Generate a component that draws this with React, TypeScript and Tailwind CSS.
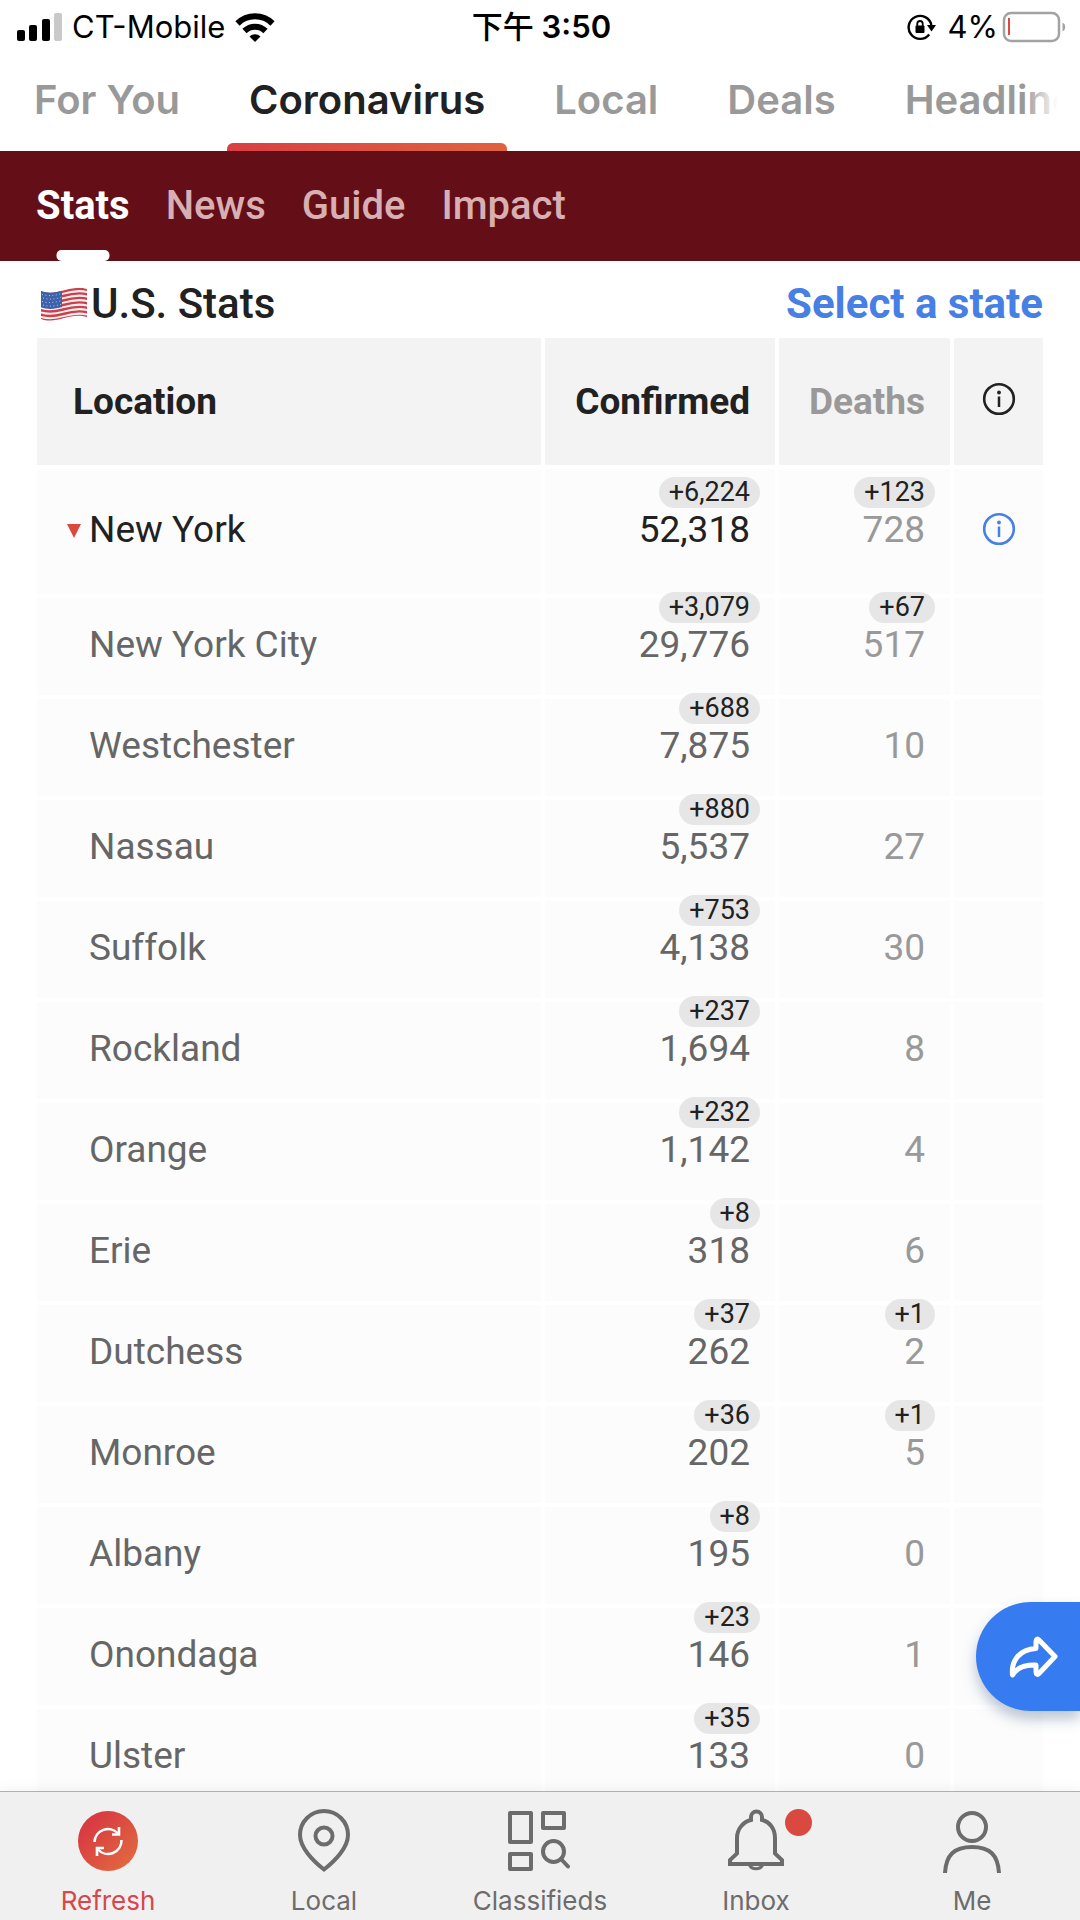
import { useState } from 'react';
import type { ReactNode } from 'react';
import { clsx } from 'clsx';

interface StatRow {
    name: string;
    confirmed: string;
    newConfirmed?: string;
    deaths: string;
    newDeaths?: string;
}

const state: StatRow = { name: 'New York', confirmed: '52,318', newConfirmed: '+6,224', deaths: '728', newDeaths: '+123' };

const counties: StatRow[] = [
    { name: 'New York City', confirmed: '29,776', newConfirmed: '+3,079', deaths: '517', newDeaths: '+67' },
    { name: 'Westchester', confirmed: '7,875', newConfirmed: '+688', deaths: '10' },
    { name: 'Nassau', confirmed: '5,537', newConfirmed: '+880', deaths: '27' },
    { name: 'Suffolk', confirmed: '4,138', newConfirmed: '+753', deaths: '30' },
    { name: 'Rockland', confirmed: '1,694', newConfirmed: '+237', deaths: '8' },
    { name: 'Orange', confirmed: '1,142', newConfirmed: '+232', deaths: '4' },
    { name: 'Erie', confirmed: '318', newConfirmed: '+8', deaths: '6' },
    { name: 'Dutchess', confirmed: '262', newConfirmed: '+37', deaths: '2', newDeaths: '+1' },
    { name: 'Monroe', confirmed: '202', newConfirmed: '+36', deaths: '5', newDeaths: '+1' },
    { name: 'Albany', confirmed: '195', newConfirmed: '+8', deaths: '0' },
    { name: 'Onondaga', confirmed: '146', newConfirmed: '+23', deaths: '1' },
    { name: 'Ulster', confirmed: '133', newConfirmed: '+35', deaths: '0' },
];

const channels = ['For You', 'Coronavirus', 'Local', 'Deals', 'Headlines'];
const sections = ['Stats', 'News', 'Guide', 'Impact'];

function StatusBar() {
    return (
        <div className="grid h-[54px] shrink-0 grid-cols-3 items-center pl-[17px] pr-[14px] text-[31px] leading-9 text-black">
            <div className="flex items-center gap-[10px]">
                <svg width="45" height="30" viewBox="0 0 45 30" aria-hidden="true">
                    <rect x="0" y="18" width="8" height="11" rx="2" />
                    <rect x="12" y="13" width="8" height="16" rx="2" />
                    <rect x="25" y="7" width="8" height="22" rx="2" />
                    <rect x="37" y="1" width="8" height="28" rx="2" fill="#c9c9c9" />
                </svg>
                <span>CT-Mobile</span>
                <svg width="40" height="30" viewBox="0 0 40 30" fill="none" stroke="#000" strokeWidth="6" aria-hidden="true">
                    <path d="M2.500 11.500a25 25 0 0 1 35 0" />
                    <path d="M9.500 19a15 15 0 0 1 21 0" />
                    <path d="M20 30l-5.500-5.500a8 8 0 0 1 11 0z" fill="#000" stroke="none" />
                </svg>
            </div>
            <div className="text-center font-semibold">
                <span className="font-medium">下午</span> 3:50
            </div>
            <div className="flex items-center justify-end">
                <svg className="mr-3" width="29" height="28" viewBox="0 0 29 28" aria-hidden="true">
                    <path d="M22.200 21.500A11.500 11.500 0 1 1 24.400 12" fill="none" stroke="#000" strokeWidth="2.400" />
                    <path d="M20 12h9l-4.500 6.500z" />
                    <rect x="8.500" y="12.500" width="9" height="7.500" rx="1" />
                    <path d="M10.300 13v-2.300a2.700 2.700 0 0 1 5.400 0V13" fill="none" stroke="#000" strokeWidth="1.800" />
                </svg>
                <span>4%</span>
                <svg className="ml-1" width="64" height="32" viewBox="0 0 64 32" aria-hidden="true">
                    <rect x="2" y="2" width="55" height="28" rx="7" fill="none" stroke="#a3a3a3" strokeWidth="2.500" />
                    <rect x="6" y="7" width="2" height="17" fill="#e0483e" />
                    <path d="M60.500 11.500a5 5 0 0 1 0 9z" fill="#a3a3a3" />
                </svg>
            </div>
        </div>
    );
}

function InfoIcon() {
    return (
        <svg width="34" height="34" viewBox="0 0 34 34" fill="none" stroke="currentColor" strokeWidth="2.600" aria-hidden="true">
            <circle cx="17" cy="17" r="14.800" />
            <path d="M17 14.500v10.500" strokeWidth="2.500" />
            <circle cx="17" cy="10.500" r="1.900" fill="currentColor" stroke="none" />
        </svg>
    );
}

function UsFlag() {
    return (
        <svg width="48" height="36" viewBox="0 0 48 36" aria-hidden="true">
            <clipPath id="flag">
                <path d="M1 5c8 3 15 1.500 22-.500S39 .500 47 3v28c-8-2.500-16-1-23 1S9 36 1 33z" />
            </clipPath>
            <g clipPath="url(#flag)">
                <rect width="48" height="36" fill="#f6f1f1" />
                <g fill="none" stroke="#cf3f4b" strokeWidth="2.400">
                    <path d="M0 6c9 3 16 1.500 23-.500S39 1.500 48 4" />
                    <path d="M0 10.500c9 3 16 1.500 23-.500S39 6 48 8.500" />
                    <path d="M0 15c9 3 16 1.500 23-.500S39 10.500 48 13" />
                    <path d="M0 19.500c9 3 16 1.500 23-.500S39 15 48 17.500" />
                    <path d="M0 24c9 3 16 1.500 23-.500S39 19.500 48 22" />
                    <path d="M0 28.500c9 3 16 1.500 23-.500S39 24 48 26.500" />
                    <path d="M0 33c9 3 16 1.500 23-.500S39 28.500 48 31" />
                </g>
                <path d="M0 4c8 3.500 15 2 22 0v17c-7 2-14 3-22 0z" fill="#3d62ab" />
                <g fill="none" stroke="#b9c8e6" strokeWidth="1" strokeDasharray="1 2.500">
                    <path d="M2 8.500c7 2 13 1 20-1" />
                    <path d="M3 12c7 2 13 1 19-1" />
                    <path d="M2 15.500c7 2 13 1 20-1" />
                    <path d="M3 19c7 2 13 1 19-1" />
                </g>
            </g>
        </svg>
    );
}

function Count({ value, delta }: { value: string; delta?: string }) {
    return (
        <span className="relative inline-block">
            {delta && (
                <span className="absolute bottom-full -right-[10px] mb-1 h-[31px] rounded-full bg-[#e6e6e6] px-[10px] text-[27px] leading-[31px] text-[#212121]">
                    {delta}
                </span>
            )}
            {value}
        </span>
    );
}

const cell = 'border-b-4 border-r-4 border-white';

function StatsTable() {
    const [open, setOpen] = useState(true);

    return (
        <table className="w-full table-fixed border-separate border-spacing-0 text-[37px] leading-9">
            <colgroup>
                <col />
                <col className="w-[234px]" />
                <col className="w-[175px]" />
                <col className="w-[89px]" />
            </colgroup>
            <thead>
                <tr className="h-[131px] bg-[#f3f3f3] text-[#212121]">
                    <th className={clsx(cell, 'pl-9 text-left font-bold')}>Location</th>
                    <th className={clsx(cell, 'pr-[25px] text-right font-bold')}>Confirmed</th>
                    <th className={clsx(cell, 'pr-[25px] text-right font-bold text-[#999]')}>Deaths</th>
                    <th className="border-b-4 border-white pb-1.5">
                        <button className="flex w-full justify-center" aria-label="About these numbers">
                            <InfoIcon />
                        </button>
                    </th>
                </tr>
            </thead>
            <tbody>
                <tr className="h-[129px] bg-[#fcfcfc] text-[#212121]">
                    <td className={clsx(cell, 'pb-1 pl-[30px]')}>
                        <button className="flex items-center gap-2" onClick={() => setOpen(!open)} aria-expanded={open}>
                            <svg className={clsx('mt-0.5', !open && '-rotate-90')} width="14" height="14" viewBox="0 0 14 14" aria-hidden="true">
                                <path d="M0 0h14L7 14z" fill="#d9493f" />
                            </svg>
                            {state.name}
                        </button>
                    </td>
                    <td className={clsx(cell, 'pb-1 pr-[25px] text-right')}>
                        <Count value={state.confirmed} delta={state.newConfirmed} />
                    </td>
                    <td className={clsx(cell, 'pb-1 pr-[25px] text-right text-[#999]')}>
                        <Count value={state.deaths} delta={state.newDeaths} />
                    </td>
                    <td className="border-b-4 border-white pb-1.5 text-[#4680e4]">
                        <button className="flex w-full justify-center" aria-label="About New York">
                            <InfoIcon />
                        </button>
                    </td>
                </tr>
                {open && counties.map((county) => (
                    <tr key={county.name} className="h-[101px] bg-[#fcfcfc] text-[#666]">
                        <td className={clsx(cell, 'pb-1 pl-[52px]')}>{county.name}</td>
                        <td className={clsx(cell, 'pb-1 pr-[25px] text-right')}>
                            <Count value={county.confirmed} delta={county.newConfirmed} />
                        </td>
                        <td className={clsx(cell, 'pb-1 pr-[25px] text-right text-[#999]')}>
                            <Count value={county.deaths} delta={county.newDeaths} />
                        </td>
                        <td className="border-b-4 border-white" />
                    </tr>
                ))}
            </tbody>
        </table>
    );
}

function NavItem({ label, active, children }: { label: string; active?: boolean; children: ReactNode }) {
    return (
        <a href="#" className={clsx('flex flex-1 flex-col items-center gap-[11px]', active ? 'text-[#d8474a]' : 'text-[#6c6c6c]')}>
            <svg width="66" height="66" viewBox="0 0 66 66" fill="none" stroke="currentColor" strokeWidth="4" aria-hidden="true">
                {children}
            </svg>
            <span className="text-[26px] leading-8">{label}</span>
        </a>
    );
}

function BottomNav() {
    return (
        <nav className="relative flex shrink-0 border-t border-[#b0b0b0] bg-[#f0f0f1] pb-[3px] pt-4 shadow-[0_-2px_12px_rgba(0,0,0,0.05)]">
            <NavItem label="Refresh" active>
                <linearGradient id="refresh" x1="0" y1="0" x2="1" y2="1">
                    <stop offset="0.200" stopColor="#d83b42" />
                    <stop offset="1" stopColor="#e2703f" />
                </linearGradient>
                <circle cx="33" cy="33" r="30" fill="url(#refresh)" stroke="none" />
                <g stroke="#fff" strokeWidth="2.600">
                    <path d="M19.500 34A13.500 13.500 0 0 1 43 25.500M46.500 32A13.500 13.500 0 0 1 23 41.500" />
                    <path d="M44 19v7.500h-7M22 48v-8h7" />
                </g>
            </NavItem>
            <NavItem label="Local">
                <path d="M33 61.500C22 53 9 39.500 9 27a24 24 0 0 1 48 0c0 12.500-13 26-24 34.500z" />
                <circle cx="33" cy="28" r="8.500" />
            </NavItem>
            <NavItem label="Classifieds">
                <g strokeLinejoin="round">
                    <path d="M3 5h21v29H3zM36 5h21v15H36zM3 46h21v15H3z" />
                </g>
                <circle cx="46.500" cy="43.500" r="10.500" />
                <path d="M54 51l7 7.500" strokeLinecap="round" />
            </NavItem>
            <NavItem label="Inbox">
                <path d="M7 56h52v-4l-7-6.500V30c0-9-5-16-13-18V9a5 5 0 0 0-11 0v3c-8 2-14 9-14 18v15.500L7 52z" />
                <path d="M26.500 57a7 6 0 0 0 13 0" strokeWidth="3" />
            </NavItem>
            <NavItem label="Me">
                <circle cx="33" cy="19" r="14" />
                <path d="M6 65c1-18 9-26 27-26s26 8 27 26" />
            </NavItem>
            <span className="absolute left-[74%] top-[17px] ml-[-14px] size-[27px] rounded-full bg-[#d9493f]" />
        </nav>
    );
}

export default function App() {
    const [channel, setChannel] = useState('Coronavirus');
    const [section, setSection] = useState('Stats');

    return (
        <div className="relative flex h-screen flex-col overflow-hidden bg-white font-['Inter','Noto_Sans_CJK_TC',sans-serif]">
            <StatusBar />
            <div className="relative flex h-[97px] shrink-0 gap-[25px] overflow-hidden pl-3 text-[40px] font-semibold leading-[46px]">
                {channels.map((name) => (
                    <button
                        key={name}
                        onClick={() => setChannel(name)}
                        className={clsx('relative h-full shrink-0 px-[22px] pb-[5px]', name === channel ? 'text-[#212121]' : 'text-[#999]')}
                    >
                        {name}
                        {name === channel && (
                            <span className="absolute inset-x-0 bottom-0 h-2 rounded-t-md bg-linear-to-r from-[#d83f42] to-[#e0623f]" />
                        )}
                    </button>
                ))}
                <div className="absolute inset-y-0 right-0 w-14 bg-linear-to-r from-transparent to-white to-60%" />
            </div>

            <div className="flex h-[110px] shrink-0 gap-9 bg-[#640f18] pl-9 font-['Roboto',sans-serif] text-[40px] leading-[46px]">
                {sections.map((name) => (
                    <button
                        key={name}
                        onClick={() => setSection(name)}
                        className={clsx('relative', name === section ? 'font-bold text-white' : 'font-medium text-[#d8afb3]')}
                    >
                        {name}
                        {name === section && (
                            <span className="absolute bottom-0 left-1/2 h-[11px] w-[53px] -translate-x-1/2 rounded-[5px] bg-white" />
                        )}
                    </button>
                ))}
            </div>

            <main className="min-h-0 flex-1 overflow-hidden px-[37px] font-['Roboto',sans-serif]">
                <div className="flex h-[77px] items-center justify-between pt-2 text-[42px] leading-[46px]">
                    <h1 className="flex items-center pl-[3px] font-medium text-[#212121]">
                        <UsFlag />
                        <span className="pl-[3px]">U.S. Stats</span>
                    </h1>
                    <a href="#" className="font-bold text-[#4680e4]">Select a state</a>
                </div>
                <StatsTable />
            </main>

            <button
                aria-label="Share"
                className="absolute bottom-[209px] right-0 flex h-[109px] w-[104px] items-center rounded-l-full bg-[#367bef] pl-8 shadow-[0_8px_14px_rgba(60,90,130,0.35)]"
            >
                <svg width="50" height="44" viewBox="0 0 50 44" fill="none" stroke="#fff" strokeWidth="5" strokeLinejoin="round" aria-hidden="true">
                    <path d="M28 6.500c0-2.500 1.500-3 3-1.500L47 21.500 31 38.500c-1.500 1.500-3 1-3-1.500v-7C17 29.500 9 32 4.500 40 3 26 11 14.500 28 13.500z" />
                </svg>
            </button>
            <BottomNav />
        </div>
    );
}
